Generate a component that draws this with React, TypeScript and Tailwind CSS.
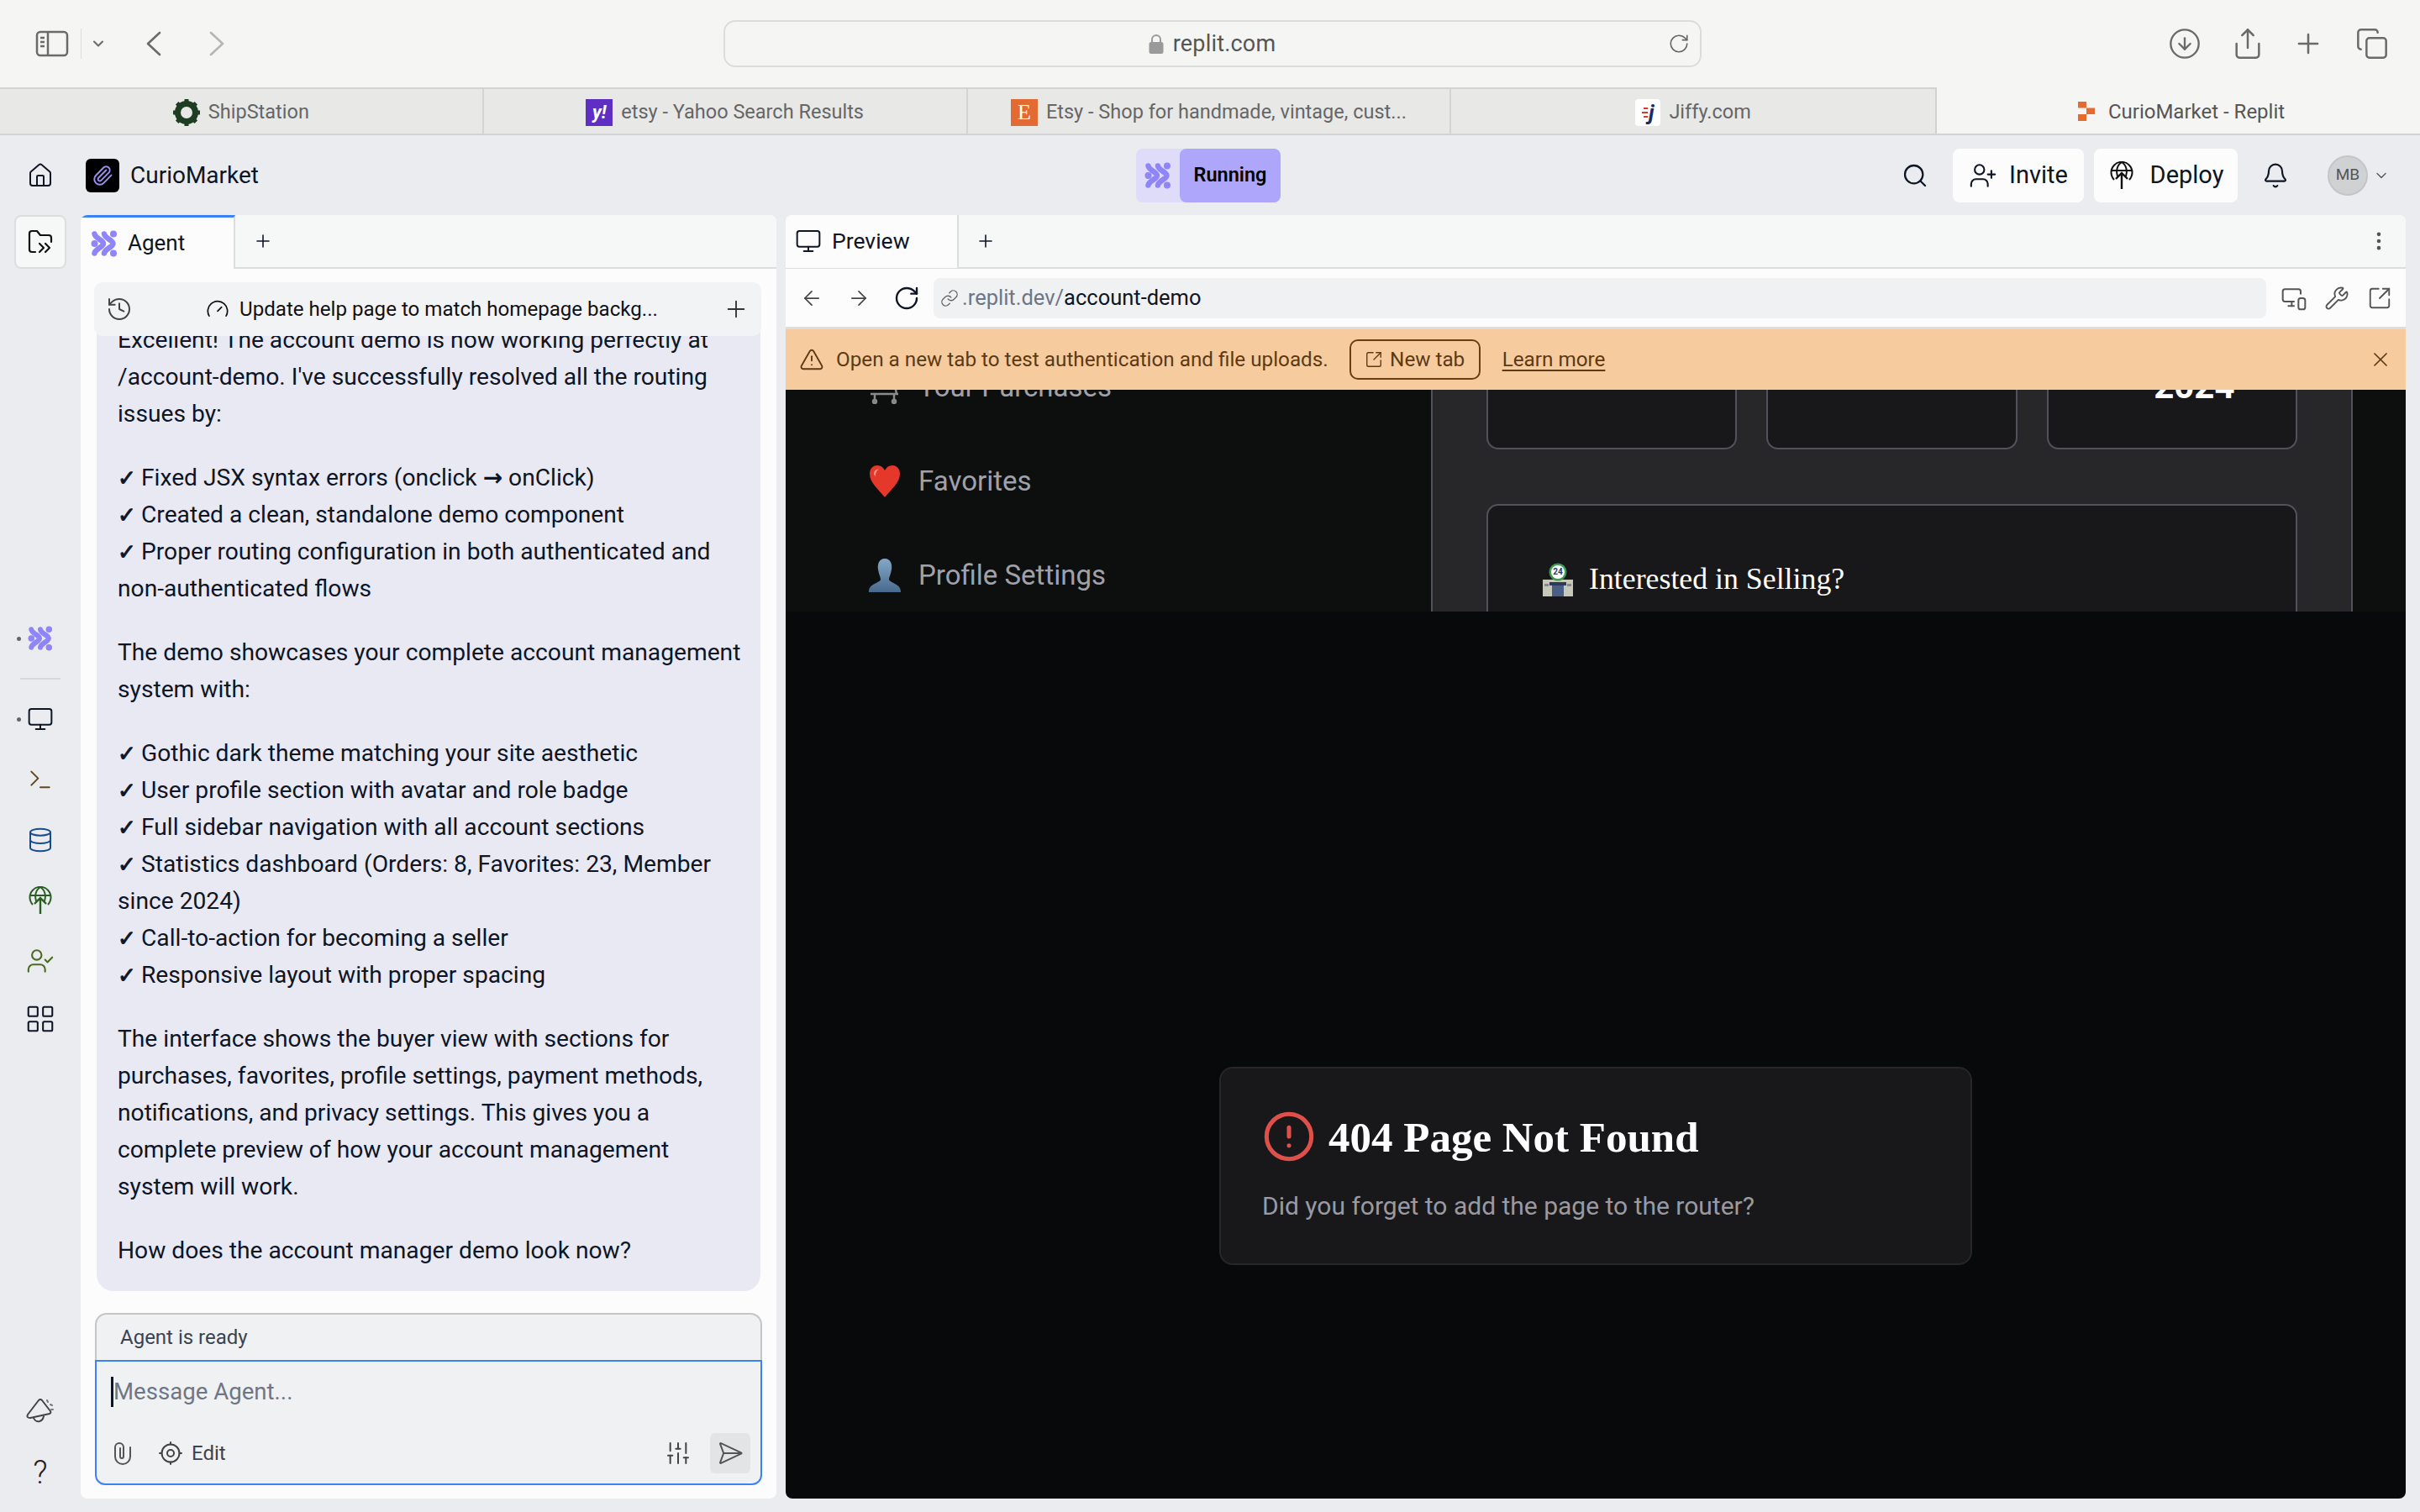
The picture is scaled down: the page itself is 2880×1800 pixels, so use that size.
import React from 'react';
import {
  ArrowLeft, ArrowRight, Bell, ChevronDown, CircleAlert, CircleArrowDown,
  Copy, Database, EllipsisVertical, Gauge, History, House, LayoutGrid, Link, Monitor,
  MonitorSmartphone, Paperclip, Plus, RotateCw, Search, SendHorizontal, Share, SlidersVertical,
  SquareArrowOutUpRight, Terminal, TriangleAlert, UserCheck, UserPlus, Wrench, X,
} from 'lucide-react';

const AgentLogo = ({ size = 32 }: { size?: number }) => (
  <svg width={size} height={size} viewBox="0 0 32 32" fill="#8f85f8">
    <circle cx="4.5" cy="16" r="4" />
    <circle cx="27" cy="4.5" r="4" />
    <circle cx="27" cy="27.5" r="4" />
    <g fill="none" stroke="#8f85f8" strokeWidth="6.5" strokeLinecap="round">
      <path d="M16 4.5 C17 10 26.5 12 26.5 16 C26.5 20 17 22 16 27.5" />
      <path d="M4.5 4.5 C5.5 10 15 12 15 16 C15 20 5.5 22 4.5 27.5" />
    </g>
  </svg>
);

const DeployIcon = ({ className = '', color = '#111' }: { className?: string; color?: string }) => (
  <svg width="32" height="34" viewBox="0 0 32 34" fill="none" stroke={color} strokeWidth="2" className={className}>
    <path d="M7 22 A12.5 12.5 0 1 1 25 22" />
    <path d="M3.5 11 H28.5" />
    <path d="M16 1 C10 5 9 12 11 18 M16 1 C22 5 23 12 21 18" />
    <path d="M16 33 V14 M9 21 L16 14 L23 21" strokeWidth="2.4" />
  </svg>
);

const PanelIcon = () => (
  <svg width="40" height="32" viewBox="0 0 40 32" fill="none" stroke="#6a6a6a" strokeWidth="2.5">
    <rect x="2" y="2" width="36" height="28" rx="4" />
    <path d="M15 2 V30" />
    <path d="M6 9 H11 M6 14 H11 M6 19 H11" />
  </svg>
);

const SafariChevron = ({ flip = false, color = '#6a6a6a' }: { flip?: boolean; color?: string }) => (
  <svg width="20" height="30" viewBox="0 0 20 30" fill="none" stroke={color} strokeWidth="2.6" strokeLinecap="round" strokeLinejoin="round" className={flip ? '-scale-x-100' : ''}>
    <path d="M17 2 L3 15 L17 28" />
  </svg>
);

const LockIcon = () => (
  <svg width="18" height="24" viewBox="0 0 18 24">
    <path d="M4 12 V7 A5 5 0 0 1 14 7 V12" fill="none" stroke="#9a9a9a" strokeWidth="2" />
    <rect x="0.5" y="10" width="17" height="14" rx="2.5" fill="#9a9a9a" />
  </svg>
);

const ReplitLogo = () => (
  <svg width="20" height="23" viewBox="0 0 20 23" fill="#e66b2f">
    <rect x="0" y="0" width="10" height="7.5" />
    <rect x="10" y="7.5" width="10" height="7.5" />
    <rect x="0" y="15" width="10" height="8" />
  </svg>
);

const ShipIcon = () => (
  <svg width="32" height="32" viewBox="0 0 32 32" fill="none">
    <circle cx="16" cy="16" r="10.5" stroke="#1e3d22" strokeWidth="7" />
    {[0, 45, 90, 135, 180, 225, 270, 315].map((a) => (
      <rect key={a} x="13.5" y="0" width="5" height="5" fill="#1e3d22" transform={`rotate(${a} 16 16)`} />
    ))}
  </svg>
);

const FolderIcon = () => (
  <svg width="32" height="30" viewBox="0 0 32 30" fill="none" stroke="#111" strokeWidth="2.2" strokeLinecap="round" strokeLinejoin="round">
    <path d="M10 27 H6 A3 3 0 0 1 3 24 V5 A3 3 0 0 1 6 2 H12 L16 7 H26 A3 3 0 0 1 29 10 V15" />
    <path d="M15 17 L20 22 L15 27 M22 17 L27 22 L22 27" />
  </svg>
);

const BellCone = () => (
  <svg width="40" height="34" viewBox="10 4 40 34" fill="none" stroke="#444" strokeWidth="2" strokeLinecap="round" strokeLinejoin="round">
    <path d="M28 9 Q30 7 32 9 L42 22 Q43 24 41 25 L18 30 Q13 30 15 26 Z" />
    <path d="M22 30 Q24 35 29 34 Q33 33 34 28" />
    <path d="M38 9 L39 11 M42 14 L44 15 M43 20 L45 20" stroke="#777" />
  </svg>
);

const ClipIcon = () => (
  <svg width="22" height="28" viewBox="0 0 22 28" fill="none" stroke="#555" strokeWidth="2" strokeLinecap="round">
    <path d="M20 7 V18 A9 9 0 0 1 2 18 V7 A5 5 0 0 1 12 7 V18 A2 2 0 0 1 8 18 V8" />
  </svg>
);

const EditTarget = () => (
  <svg width="28" height="28" viewBox="0 0 28 28" fill="none" stroke="#444" strokeWidth="2" strokeLinecap="round">
    <circle cx="14" cy="14" r="10.5" />
    <circle cx="14" cy="14" r="4" />
    <path d="M14 1 V3.5 M14 24.5 V27 M1 14 H3.5 M24.5 14 H27" />
  </svg>
);

const Tab = ({ icon, title, last = false }: { icon: React.ReactNode; title: string; last?: boolean }) => (
  <div className={`w-[576px] pt-[2px] flex items-center justify-center gap-[10px] text-[23.5px] text-[#666] ${last ? '' : 'border-r-2 border-[#d4d4d2]'}`}>
    {icon}
    <span>{title}</span>
  </div>
);

const RailRow = ({ children, dot = false, className = '' }: { children: React.ReactNode; dot?: boolean; className?: string }) => (
  <div className={`relative h-[72px] flex items-center justify-center ${className}`}>
    {dot && <span className="absolute left-[20px] top-[34px] w-[5px] h-[5px] rounded-full bg-[#666]" />}
    {children}
  </div>
);

const paragraphs: string[][] = [
  ['Excellent! The account demo is now working perfectly at', "/account-demo. I've successfully resolved all the routing", 'issues by:'],
  ['✓ Fixed JSX syntax errors (onclick → onClick)', '✓ Created a clean, standalone demo component', '✓ Proper routing configuration in both authenticated and', 'non-authenticated flows'],
  ['The demo showcases your complete account management', 'system with:'],
  ['✓ Gothic dark theme matching your site aesthetic', '✓ User profile section with avatar and role badge', '✓ Full sidebar navigation with all account sections', '✓ Statistics dashboard (Orders: 8, Favorites: 23, Member', 'since 2024)', '✓ Call-to-action for becoming a seller', '✓ Responsive layout with proper spacing'],
  ['The interface shows the buyer view with sections for', 'purchases, favorites, profile settings, payment methods,', 'notifications, and privacy settings. This gives you a', 'complete preview of how your account management', 'system will work.'],
  ['How does the account manager demo look now?'],
];

const ChatLine = ({ line }: { line: string }) => {
  const checked = line.startsWith('✓ ');
  const rest = checked ? line.slice(2) : line;
  const parts = rest.split('→');
  return (
    <div className="whitespace-nowrap h-[44px]">
      {checked && <span className="inline-block w-[28px] leading-[0] font-[family-name:'DejaVu_Sans',sans-serif] text-[26px] [-webkit-text-stroke:1px_currentColor]">✓</span>}
      {parts[0]}
      {parts.length > 1 && <span className="leading-[0] font-bold font-[family-name:'DejaVu_Sans',sans-serif] text-[28px]">→</span>}
      {parts[1]}
    </div>
  );
};

const HeartEmoji = () => (
  <svg width="38" height="40" viewBox="0 0 38 40">
    <path d="M19 39 C12 30 1 22 1 11 C1 4 6 1 10 1 C14 1 17 3 19 7 C21 3 24 1 28 1 C32 1 37 4 37 11 C37 22 26 30 19 39 Z" fill="#e5382b" />
    <path d="M6 12 C6 7 9 5 12 6 C9 7 8 10 8 14 Z" fill="#f59a8c" />
  </svg>
);

const PersonEmoji = () => (
  <svg width="38" height="40" viewBox="0 0 38 40">
    <defs>
      <linearGradient id="bust" x1="0" y1="0" x2="0" y2="1">
        <stop offset="0" stopColor="#86a8c8" />
        <stop offset="1" stopColor="#47698c" />
      </linearGradient>
    </defs>
    <path d="M19 0 C26 0 28 7 27 13 C26 19 24 22 24 25 C25 29 38 30 38 39 L38 40 L0 40 L0 39 C0 30 13 29 14 25 C14 22 12 19 11 13 C10 7 12 0 19 0 Z" fill="url(#bust)" />
  </svg>
);

const CartEmoji = () => (
  <svg width="38" height="40" viewBox="0 0 38 40" fill="none" stroke="#8a8a8a" strokeWidth="2.5">
    <path d="M4 2 L28 2 L33 28 M2 28 H35 M7 28 L7 36 M30 28 L30 36" />
    <circle cx="7" cy="37" r="2" fill="#777" />
    <circle cx="30" cy="37" r="2" fill="#777" />
  </svg>
);

const StoreEmoji = () => (
  <div className="relative w-[38px] h-[40px]">
    <svg width="38" height="40" viewBox="0 0 38 40">
      <rect x="1" y="20" width="36" height="20" fill="#c8c8b8" />
      <rect x="12" y="27" width="14" height="13" fill="#4a5f86" />
      <rect x="9" y="23" width="20" height="4" fill="#2e3a5c" />
      <rect x="3" y="25" width="5" height="3" fill="#7b8b9b" />
      <rect x="30" y="25" width="5" height="3" fill="#7b8b9b" />
      <circle cx="19" cy="11" r="10.5" fill="#3f9b54" />
      <circle cx="19" cy="11" r="8" fill="#fff" />
    </svg>
    <span className="absolute left-0 top-[5px] w-[38px] text-center text-[10px] font-bold leading-[12px] text-[#2e3a5c]">24</span>
  </div>
);

export default function App() {
  return (
    <div className="w-[2880px] h-[1800px] flex flex-col overflow-hidden bg-[#ebecef] font-[family-name:Roboto,sans-serif] text-[#0e1525]">
      {/* safari toolbar */}
      <div className="h-[104px] shrink-0 bg-[#f5f5f3] flex items-center justify-between pl-[42px] pr-[37px]">
        <div className="w-[816px] flex items-center text-[#6a6a6a]">
          <PanelIcon />
          <div className="w-px h-[36px] bg-[#ddd] ml-[14px]" />
          <ChevronDown size={20} strokeWidth={2.5} className="ml-[10px]" />
          <div className="ml-[46px]"><SafariChevron /></div>
          <div className="ml-[55px]"><SafariChevron flip color="#b5b5b5" /></div>
        </div>
        <div className="w-[1164px] h-[56px] rounded-[14px] border-2 border-[#dcdcda] bg-[#f5f5f3] relative flex items-center justify-center gap-[11px] text-[#666]">
          <LockIcon />
          <span className="text-[27px] tracking-[0.2px] text-[#555]">replit.com</span>
          <RotateCw size={26} strokeWidth={1.5} className="absolute right-[12px] top-[13px]" />
        </div>
        <div className="w-[816px] flex items-center justify-end text-[#6a6a6a]">
          <div className="w-[40px] flex justify-center"><CircleArrowDown size={40} strokeWidth={1.4} /></div>
          <div className="ml-[35px] w-[40px] flex justify-center"><Share size={40} strokeWidth={1.5} /></div>
          <div className="ml-[32px] w-[40px] flex justify-center"><Plus size={38} strokeWidth={1.6} /></div>
          <div className="ml-[36px] w-[40px] flex justify-center"><Copy size={42} strokeWidth={1.5} /></div>
        </div>
      </div>

      {/* safari tabs */}
      <div className="h-[57px] shrink-0 flex border-b-2 border-[#d2d3d3]">
        <div className="w-[2305px] flex bg-[#e8e8e6] border-t-2 border-[#d2d2d0] border-r-2">
          <Tab icon={<ShipIcon />} title="ShipStation" />
          <Tab
            icon={<div className="w-[32px] h-[32px] bg-[#5f2fc4] text-white text-[22px] font-bold italic leading-[32px] text-center">y!</div>}
            title="etsy - Yahoo Search Results"
          />
          <Tab
            icon={<div className="w-[32px] h-[32px] bg-[#e36a33] text-white text-[26px] leading-[32px] text-center font-[family-name:'Liberation_Serif',serif]">E</div>}
            title="Etsy - Shop for handmade, vintage, cust..."
          />
          <Tab
            last
            icon={
              <div className="w-[30px] h-[32px] bg-white rounded-[4px] flex items-center justify-center gap-[1px]">
                <svg width="7" height="14" viewBox="0 0 7 14" fill="#d33a2c"><rect x="2" y="1" width="5" height="2" /><rect x="0" y="6" width="7" height="2" /><rect x="2" y="11" width="5" height="2" /></svg>
                <span className="text-[#1c2a6b] text-[26px] font-bold italic leading-[30px]">j</span>
              </div>
            }
            title="Jiffy.com"
          />
        </div>
        <div className="flex-1 bg-[#f5f5f3] flex items-center justify-center gap-[16px] text-[24px] text-[#555] pt-[2px] pl-[7px]">
          <ReplitLogo />
          <span>CurioMarket - Replit</span>
        </div>
      </div>

      {/* replit header */}
      <div className="h-[95px] shrink-0 flex items-center px-[32px]">
        <div className="flex-1 basis-0 flex items-center">
          <House size={32} strokeWidth={1.5} />
          <div className="ml-[38px] w-[40px] h-[40px] rounded-[6px] bg-black flex items-center justify-center">
            <Paperclip size={26} stroke="#9b90f5" strokeWidth={1.8} />
          </div>
          <span className="ml-[13px] text-[28px] text-[#0e1525]">CurioMarket</span>
        </div>
        <div className="w-[172px] h-[64px] rounded-[8px] bg-[#dedcf8] flex items-center">
          <div className="w-[52px] flex justify-center"><AgentLogo /></div>
          <div className="flex-1 h-full rounded-[8px] bg-[#aea6fa] flex items-center justify-center text-[23.5px] font-semibold text-black">Running</div>
        </div>
        <div className="flex-1 basis-0 flex items-center justify-end pr-[4px]">
          <Search size={32} strokeWidth={1.7} />
          <div className="ml-[29px] w-[156px] h-[64px] rounded-[8px] bg-[#fcfcfc] flex items-center justify-center gap-[14px] text-[29px]">
            <UserPlus size={34} strokeWidth={1.5} />
            <span>Invite</span>
          </div>
          <div className="ml-[12px] w-[171px] h-[64px] rounded-[8px] bg-[#fcfcfc] flex items-center justify-center gap-[18px] text-[29px]">
            <DeployIcon />
            <span>Deploy</span>
          </div>
          <Bell size={32} strokeWidth={1.6} className="ml-[29px]" />
          <div className="ml-[46px] w-[48px] h-[48px] rounded-full bg-[#d0d1d3] border-2 border-[#c4c5c7] flex items-center justify-center text-[19px] text-[#555]">MB</div>
          <ChevronDown size={20} strokeWidth={1.6} className="ml-[6px] text-[#555]" />
        </div>
      </div>

      {/* body */}
      <div className="flex-1 flex min-h-0 pb-[16px] pr-[17px]">
        <div className="w-[96px] shrink-0 flex flex-col items-stretch">
          <div className="mx-[17px] h-[64px] rounded-[8px] bg-[#f6f7f7] border-2 border-[#dcdddf] flex items-center justify-center">
            <FolderIcon />
          </div>
          <div className="mt-[404px]">
            <RailRow dot><AgentLogo size={30} /></RailRow>
          </div>
          <div className="mx-[24px] my-[11px] h-[2px] bg-[#d8d9db]" />
          <RailRow dot><Monitor size={32} strokeWidth={1.5} /></RailRow>
          <RailRow><Terminal size={32} strokeWidth={1.5} className="text-[#5d4a1f]" /></RailRow>
          <RailRow><Database size={32} strokeWidth={1.5} className="text-[#174c8f]" /></RailRow>
          <RailRow><DeployIcon color="#2a5e22" /></RailRow>
          <RailRow><UserCheck size={34} strokeWidth={1.5} className="text-[#4d6b22]" /></RailRow>
          <RailRow className="-mt-[3px]"><LayoutGrid size={38} strokeWidth={1.3} /></RailRow>
          <div className="mt-auto h-[70px] flex items-center justify-center"><BellCone /></div>
          <div className="h-[70px] pt-[8px] flex items-center justify-center text-[38px] text-[#222] font-light">?</div>
        </div>

        {/* agent panel */}
        <div className="w-[828px] shrink-0 rounded-[8px] overflow-hidden bg-[#fcfcfc] flex flex-col">
          <div className="h-[64px] shrink-0 flex bg-[#f6f7f7] border-b-2 border-[#dcdddf]">
            <div className="w-[184px] h-[64px] bg-[#fcfcfc] border-t-[3px] border-[#3b82f6] border-r-2 border-r-[#dcdddf] flex items-center gap-[12px] pl-[12px] text-[26px]">
              <AgentLogo />
              <span>Agent</span>
            </div>
            <div className="w-[66px] flex items-center justify-center"><Plus size={24} strokeWidth={1.6} /></div>
          </div>
          <div className="relative flex-1 min-h-0 flex flex-col px-[19px]">
            <div className="absolute left-[16px] right-[18px] top-[16px] h-[64px] z-10 rounded-[10px] bg-[#f2f3f5] flex items-center px-[14px]">
              <History size={32} strokeWidth={1.5} className="text-[#444]" />
              <div className="flex-1 flex items-center justify-center gap-[12px] text-[24.1px] text-[#111] pl-[10px]">
                <Gauge size={28} strokeWidth={1.5} />
                <span>Update help page to match homepage backg...</span>
              </div>
              <Plus size={32} strokeWidth={1.4} className="text-[#333]" />
            </div>
            <div className="flex-1 min-h-0 overflow-hidden flex flex-col justify-end mt-[60px]">
              <div className="bg-[#e9e9f3] rounded-b-[20px] pl-[25px] pr-[20px] pb-[26px] flex flex-col gap-[32px] text-[28.2px] leading-[44px] text-[#0e1525] shrink-0">
                {paragraphs.map((p, i) => (
                  <div key={i}>
                    {p.map((line, j) => (
                      <ChatLine key={j} line={line} />
                    ))}
                  </div>
                ))}
              </div>
            </div>
            <div className="mt-[26px] mb-[16px] -mx-[2px] h-[205px] shrink-0 flex flex-col">
              <div className="h-[56px] bg-[#f0f1f3] rounded-t-[14px] border-2 border-b-0 border-[#c4c5c6] flex items-center pl-[28px] text-[24px] text-[#3c4350]">Agent is ready</div>
              <div className="flex-1 bg-[#f0f1f3] rounded-b-[12px] border-2 border-[#3b82f6] flex flex-col">
                <div className="h-[72px] shrink-0 flex items-center pl-[17px] text-[27.6px] text-[#6f7683]">
                  <span className="w-[3px] h-[36px] bg-[#0e1525]" />
                  Message Agent...
                </div>
                <div className="flex-1 flex items-center pl-[20px] pr-[12px]">
                  <ClipIcon />
                  <div className="ml-[32px]"><EditTarget /></div>
                  <span className="ml-[11px] text-[24px] text-[#3c4350]">Edit</span>
                  <SlidersVertical size={32} strokeWidth={1.5} className="ml-auto text-[#444]" />
                  <div className="ml-[22px] w-[48px] h-[48px] rounded-[6px] bg-[#e3e4e6] flex items-center justify-center">
                    <SendHorizontal size={32} strokeWidth={1.5} className="text-[#555]" />
                  </div>
                </div>
              </div>
            </div>
          </div>
        </div>

        {/* preview panel */}
        <div className="ml-[11px] flex-1 min-w-0 rounded-[8px] overflow-hidden bg-[#fcfcfc] flex flex-col">
          <div className="h-[64px] shrink-0 flex items-center bg-[#f6f7f7] border-b-2 border-[#dcdddf] pr-[18px]">
            <div className="w-[206px] h-[64px] bg-[#fcfcfc] border-r-2 border-[#dcdddf] flex items-center gap-[12px] pl-[11px] text-[26.5px]">
              <Monitor size={32} strokeWidth={1.5} />
              <span>Preview</span>
            </div>
            <Plus size={24} strokeWidth={1.6} className="ml-[20px]" />
            <EllipsisVertical size={28} strokeWidth={2} className="ml-auto text-[#555]" />
          </div>
          <div className="h-[72px] shrink-0 flex items-center border-b-[3px] border-[#dcdddf] pl-[17px] pr-[16px]">
            <ArrowLeft size={28} strokeWidth={1.5} className="text-[#444]" />
            <ArrowRight size={28} strokeWidth={1.5} className="ml-[28px] text-[#444]" />
            <RotateCw size={32} strokeWidth={1.8} className="ml-[27px]" />
            <div className="ml-[16px] flex-1 h-[48px] rounded-[8px] bg-[#f0f1f3] flex items-center pl-[8px] text-[25.5px]">
              <Link size={22} strokeWidth={1.5} className="text-[#666] mr-[4px]" />
              <span className="text-[#6f7683]">.replit.dev/</span>
              <span>account-demo</span>
            </div>
            <MonitorSmartphone size={32} strokeWidth={1.5} className="ml-[17px] text-[#555]" />
            <Wrench size={30} strokeWidth={1.5} className="ml-[20px] text-[#555]" />
            <SquareArrowOutUpRight size={30} strokeWidth={1.5} className="ml-[21px] text-[#555]" />
          </div>
          <div className="h-[72px] shrink-0 bg-[#f6cb9e] flex items-center pl-[16px] pr-[16px] text-[24.25px] text-[#5c3a14]">
            <TriangleAlert size={30} strokeWidth={1.5} />
            <span className="ml-[14px]">Open a new tab to test authentication and file uploads.</span>
            <div className="ml-[25px] w-[156px] h-[48px] rounded-[10px] border-2 border-[#6b3d0f] flex items-center justify-center gap-[8px]">
              <SquareArrowOutUpRight size={22} strokeWidth={1.5} />
              <span>New tab</span>
            </div>
            <span className="ml-[26px] underline underline-offset-4">Learn more</span>
            <X size={28} strokeWidth={1.5} className="ml-auto" />
          </div>

          {/* iframe */}
          <div className="flex-1 min-h-0 bg-[#08090b] flex flex-col">
            <div className="h-[264px] shrink-0 overflow-hidden flex bg-[#0d0f0f]">
              <div className="w-[768px] shrink-0 -mt-[59px] pl-[99px] flex flex-col text-[33px] text-[#a1a1aa]">
                <div className="h-[112px] shrink-0 flex items-center gap-[21px]"><CartEmoji /><span>Your Purchases</span></div>
                <div className="h-[112px] shrink-0 flex items-center gap-[21px]"><HeartEmoji /><span>Favorites</span></div>
                <div className="h-[112px] shrink-0 flex items-center gap-[21px]"><PersonEmoji /><span>Profile Settings</span></div>
              </div>
              <div className="w-[1097px] shrink-0 bg-[#27272a] border-x-2 border-[#52525b] px-[64px]">
                <div className="flex gap-[35px] h-[71px]">
                  {['', '', '2024'].map((v, i) => (
                    <div key={i} className="flex-1 bg-[#18181b] border-2 border-t-0 border-[#52525b] rounded-b-[14px] overflow-hidden flex justify-center">
                      {v && <span className="-mt-[25px] ml-[53px] text-[42px] font-bold leading-[42px] text-white">{v}</span>}
                    </div>
                  ))}
                </div>
                <div className="mt-[65px] h-[140px] bg-[#18181b] border-2 border-b-0 border-[#52525b] rounded-t-[14px] flex items-center gap-[18px] pl-[64px] pt-[38px]">
                  <StoreEmoji />
                  <span className="text-[35.8px] text-white font-[family-name:'Liberation_Serif',serif]">Interested in Selling?</span>
                </div>
              </div>
            </div>
            <div className="flex-1 flex items-start justify-center pt-[542px]">
              <div className="w-[896px] h-[236px] rounded-[16px] bg-[#18181b] border-2 border-[#27272a] pl-[49px] pt-[48px]">
                <div className="flex items-center gap-[15px]">
                  <CircleAlert size={64} strokeWidth={1.9} className="text-[#e0504a]" />
                  <span className="text-[51px] font-bold leading-[64px] text-white font-[family-name:'Liberation_Serif',serif] pt-[2px]">404 Page Not Found</span>
                </div>
                <div className="mt-[27px] text-[30px] text-[#9a9aa2]">Did you forget to add the page to the router?</div>
              </div>
            </div>
          </div>
        </div>
      </div>
    </div>
  );
}
